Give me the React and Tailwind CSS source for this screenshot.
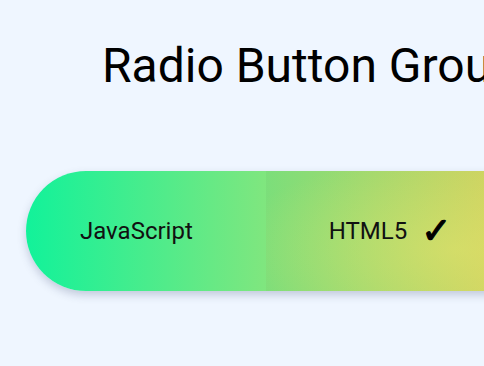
import React, { useState } from 'react';

const options = ['JavaScript', 'HTML5', 'CSS3'];

export default function App() {
    const [selected, setSelected] = useState('HTML5');

    return (
        <div className="min-h-screen w-full overflow-hidden bg-[#eff6ff] font-['Roboto',sans-serif]">
            <h1 className="pl-[102px] pt-[38px] text-[48px] leading-[56px] text-black whitespace-nowrap">
                Radio Button Group
            </h1>
            <div className="mt-[77px] ml-[26px] flex w-[720px] h-[120px] rounded-l-[60px] overflow-hidden shadow-[0_4px_8px_rgba(60,70,110,0.25)] bg-[linear-gradient(90deg,#12f29a_0%,#82e67e_34%,#d4da64_64%,#f2c84a_100%)]">
                {options.map((opt) => (
                    <button
                        key={opt}
                        onClick={() => setSelected(opt)}
                        className={
                            selected === opt
                                ? "relative w-[240px] h-full shrink-0 flex items-center justify-center gap-[14px] pl-[8px] bg-[radial-gradient(ellipse_at_78%_65%,rgba(225,222,105,0.45)_0%,rgba(0,0,0,0.035)_85%)]"
                                : "w-[240px] h-full shrink-0 flex items-center pl-[54px]"
                        }
                    >
                        <span className="text-[24px] text-[#111]">{opt}</span>
                        {selected === opt && (
                            <span className="text-[36px] leading-none font-bold text-black [-webkit-text-stroke:1.2px_black] font-['DejaVu_Sans',sans-serif]">✓</span>
                        )}
                    </button>
                ))}
            </div>
        </div>
    );
}
